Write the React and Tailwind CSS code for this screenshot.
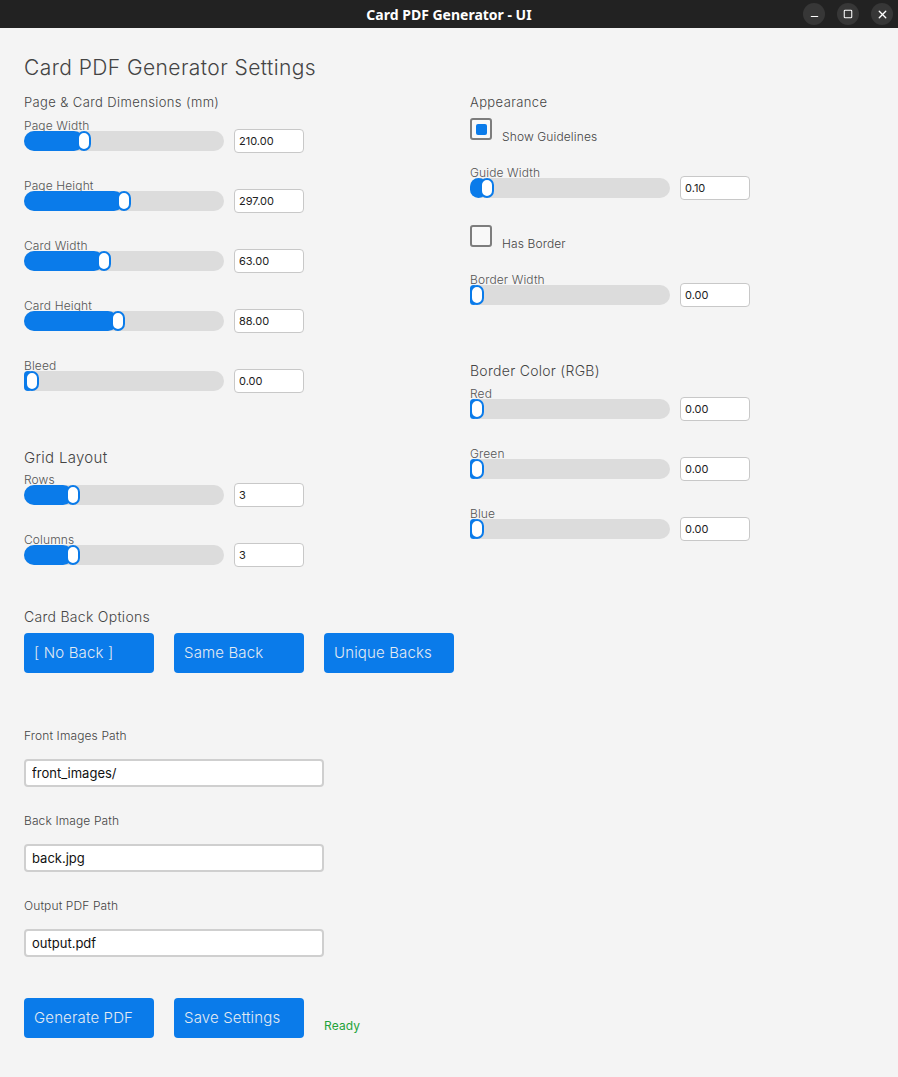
import { Minus, Square, X } from "lucide-react";

const BLUE = "bg-[#0a7bea]";

function TitleBar() {
    return <div className="relative flex h-7 items-center justify-center bg-[#222222]">
        <div className="text-[14px] font-bold text-white" style={{ fontFamily: '"Noto Sans", sans-serif' }}>Card PDF Generator - UI</div>
        <div className="absolute right-[5px] top-[3px] flex gap-3">
            <div className="flex h-[22px] w-[22px] items-center justify-center rounded-full bg-[#373737] text-white"><Minus size={11} strokeWidth={2.5} className="translate-y-[2px]" /></div>
            <div className="flex h-[22px] w-[22px] items-center justify-center rounded-full bg-[#373737] text-white"><Square size={10} strokeWidth={2.5} /></div>
            <div className="flex h-[22px] w-[22px] items-center justify-center rounded-full bg-[#373737] text-white"><X size={13} strokeWidth={2.5} /></div>
        </div>
    </div>
}

function Slider({ label, value, offset, className = "" }) {
    return <div className={className}>
        <div className="text-[12px] font-light leading-[11px] tracking-[0.01em] text-[#555]">{label}</div>
        <div className="flex h-5 items-center gap-[10px]">
            <div className="relative h-5 w-[200px] shrink-0 rounded-full bg-[#dcdcdc]">
                <div className={`h-5 rounded-full ${BLUE}`} style={{ width: offset + 7 }} />
                <div className="absolute top-0 h-5 w-[14px] rounded-full border-2 border-[#0a7bea] bg-white" style={{ left: offset }} />
            </div>
            <input readOnly value={value} className="h-6 w-[70px] shrink-0 rounded-[4px] border border-[#c8c8c8] bg-white px-1 text-[11px] text-[#222] outline-none" />
        </div>
    </div>
}

function Check({ label, checked, className = "" }) {
    return <div className={`flex items-start ${className}`}>
        <div className="flex h-[22px] w-[22px] items-center justify-center rounded-[3px] border-2 border-[#7d7d7d] bg-[#f8f8f8]">
            {checked && <div className={`h-[11px] w-[11px] rounded-[2px] ${BLUE}`} />}
        </div>
        <div className="ml-[10px] mt-[11px] text-[12px] font-light leading-[15px] tracking-[0.01em] text-[#444]">{label}</div>
    </div>
}

function BlueButton({ children }) {
    return <div className={`flex h-10 w-[130px] items-center rounded-[4px] ${BLUE} pl-[10px] text-[15px] font-light tracking-[0.01em] text-[#e3eaf2]`}>{children}</div>
}

function PathField({ label, value, className = "" }) {
    return <div className={className}>
        <div className="text-[12px] font-light leading-4 tracking-[0.01em] text-[#444]">{label}</div>
        <input readOnly value={value} className="mt-[15px] h-7 w-[300px] rounded-[4px] border-2 border-[#cfcfcf] bg-white px-[6px] text-[13px] text-[#111] outline-none" />
    </div>
}

export default function App() {
    return <div className="h-[1077px] overflow-hidden bg-[#f4f4f4]" style={{ fontFamily: 'Inter, "Noto Sans", sans-serif' }}>
        <TitleBar />

        <div className="px-6">
            <div className="mt-[26px] text-[21px] font-light leading-7 tracking-[0.02em] text-[#444]">Card PDF Generator Settings</div>

            {/* two columns */}
            <div className="mt-3 flex items-start">
                <div className="w-[446px]">
                    <div className="text-[13px] font-light leading-4 tracking-[0.03em] text-[#444]">Page &amp; Card Dimensions (mm)</div>
                    <Slider className="mt-[10px]" label="Page Width" value="210.00" offset={53} />
                    <Slider className="mt-[29px]" label="Page Height" value="297.00" offset={93} />
                    <Slider className="mt-[29px]" label="Card Width" value="63.00" offset={73} />
                    <Slider className="mt-[29px]" label="Card Height" value="88.00" offset={87} />
                    <Slider className="mt-[29px]" label="Bleed" value="0.00" offset={1} />

                    <div className="mt-[58px] text-[15px] font-light leading-[18px] tracking-[0.02em] text-[#444]">Grid Layout</div>
                    <Slider className="mt-[7px]" label="Rows" value="3" offset={42} />
                    <Slider className="mt-[29px]" label="Columns" value="3" offset={42} />
                </div>

                <div>
                    <div className="text-[13px] font-light leading-4 tracking-[0.03em] text-[#444]">Appearance</div>
                    <Check className="mt-2" label="Show Guidelines" checked />
                    <Slider className="mt-[23px]" label="Guide Width" value="0.10" offset={10} />
                    <Check className="mt-[27px]" label="Has Border" />
                    <Slider className="mt-[23px]" label="Border Width" value="0.00" offset={0} />

                    <div className="mt-[57px] text-[14px] font-light leading-[18px] tracking-[0.02em] text-[#444]">Border Color (RGB)</div>
                    <Slider className="mt-2" label="Red" value="0.00" offset={0} />
                    <Slider className="mt-[29px]" label="Green" value="0.00" offset={0} />
                    <Slider className="mt-[29px]" label="Blue" value="0.00" offset={0} />
                </div>
            </div>

            {/* card back */}
            <div className="mt-[43px] text-[14px] font-light leading-[18px] tracking-[0.02em] text-[#444]">Card Back Options</div>
            <div className="mt-[7px] flex gap-5">
                <BlueButton>[ No Back ]</BlueButton>
                <BlueButton>Same Back</BlueButton>
                <BlueButton>Unique Backs</BlueButton>
            </div>

            {/* paths */}
            <PathField className="mt-[55px]" label="Front Images Path" value="front_images/" />
            <PathField className="mt-[26px]" label="Back Image Path" value="back.jpg" />
            <PathField className="mt-[26px]" label="Output PDF Path" value="output.pdf" />

            <div className="mt-[41px] flex items-end gap-5">
                <BlueButton>Generate PDF</BlueButton>
                <BlueButton>Save Settings</BlueButton>
                <div className="mb-1 text-[12px] leading-4 tracking-[0.01em] text-[#1fa33a]">Ready</div>
            </div>
        </div>
    </div>
}
